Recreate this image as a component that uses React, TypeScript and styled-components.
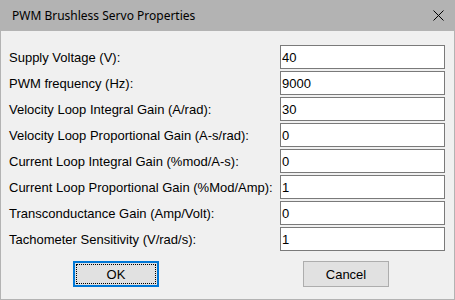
import styled, { createGlobalStyle } from "styled-components";

const GlobalStyle = createGlobalStyle`
  html, body {
    margin: 0;
    padding: 0;
    background: #ffffff;
  }
  * {
    box-sizing: border-box;
  }
`;

const Window = styled.div`
  width: 455px;
  height: 300px;
  display: flex;
  flex-direction: column;
  background: #b3b3b3;
  padding: 0 1px 1px 1px;
`;

const TitleBar = styled.div`
  height: 31px;
  display: flex;
  align-items: center;
  justify-content: space-between;
  padding: 0 10px 0 11px;
  font-family: "Noto Sans", "Open Sans", sans-serif;
  font-size: 12px;
  color: #000000;
`;

const Body = styled.div`
  flex: 1;
  background: #f0f0f0;
  padding: 14px 9px 0 8px;
  font-family: "Liberation Sans", Arial, sans-serif;
  font-size: 13px;
  color: #000000;
`;

const Row = styled.div`
  display: flex;
  align-items: center;
  height: 24px;
  margin-bottom: 2px;
`;

const Label = styled.label`
  flex: 1;
  white-space: nowrap;
  padding-top: 1px;
`;

const Field = styled.input`
  width: 165px;
  height: 24px;
  border: 1px solid #7a7a7a;
  background: #ffffff;
  padding: 0 1px;
  font-family: "Liberation Sans", Arial, sans-serif;
  font-size: 13px;
  color: #000000;
  outline: none;
`;

const ButtonRow = styled.div`
  display: flex;
  gap: 144px;
  padding-left: 64px;
  margin-top: 10px;
`;

const Button = styled.button<{ $default?: boolean }>`
  position: relative;
  width: 86px;
  height: 26px;
  background: #e1e1e1;
  border: ${(p) => (p.$default ? "2px solid #0078d7" : "1px solid #adadad")};
  font-family: "Liberation Sans", Arial, sans-serif;
  font-size: 13px;
  color: #000000;
  padding: 0;

  &::after {
    content: "";
    display: ${(p) => (p.$default ? "block" : "none")};
    position: absolute;
    inset: 1px;
    border: 1px dotted #000000;
  }
`;

const fields: [string, string][] = [
  ["Supply Voltage (V):", "40"],
  ["PWM frequency (Hz):", "9000"],
  ["Velocity Loop Integral Gain (A/rad):", "30"],
  ["Velocity Loop Proportional Gain (A-s/rad):", "0"],
  ["Current Loop Integral Gain (%mod/A-s):", "0"],
  ["Current Loop Proportional Gain (%Mod/Amp):", "1"],
  ["Transconductance Gain (Amp/Volt):", "0"],
  ["Tachometer Sensitivity (V/rad/s):", "1"],
];

export default function App() {
  return (
    <>
      <GlobalStyle />
      <Window>
        <TitleBar>
          <span>PWM Brushless Servo Properties</span>
          <svg width="11" height="11" viewBox="0 0 11 11">
            <path d="M0.5 0.5 L10.5 10.5 M10.5 0.5 L0.5 10.5" stroke="#000" strokeWidth="1" />
          </svg>
        </TitleBar>
        <Body>
          {fields.map(([label, value]) => (
            <Row key={label}>
              <Label>{label}</Label>
              <Field defaultValue={value} />
            </Row>
          ))}
          <ButtonRow>
            <Button $default>OK</Button>
            <Button>Cancel</Button>
          </ButtonRow>
        </Body>
      </Window>
    </>
  );
}
